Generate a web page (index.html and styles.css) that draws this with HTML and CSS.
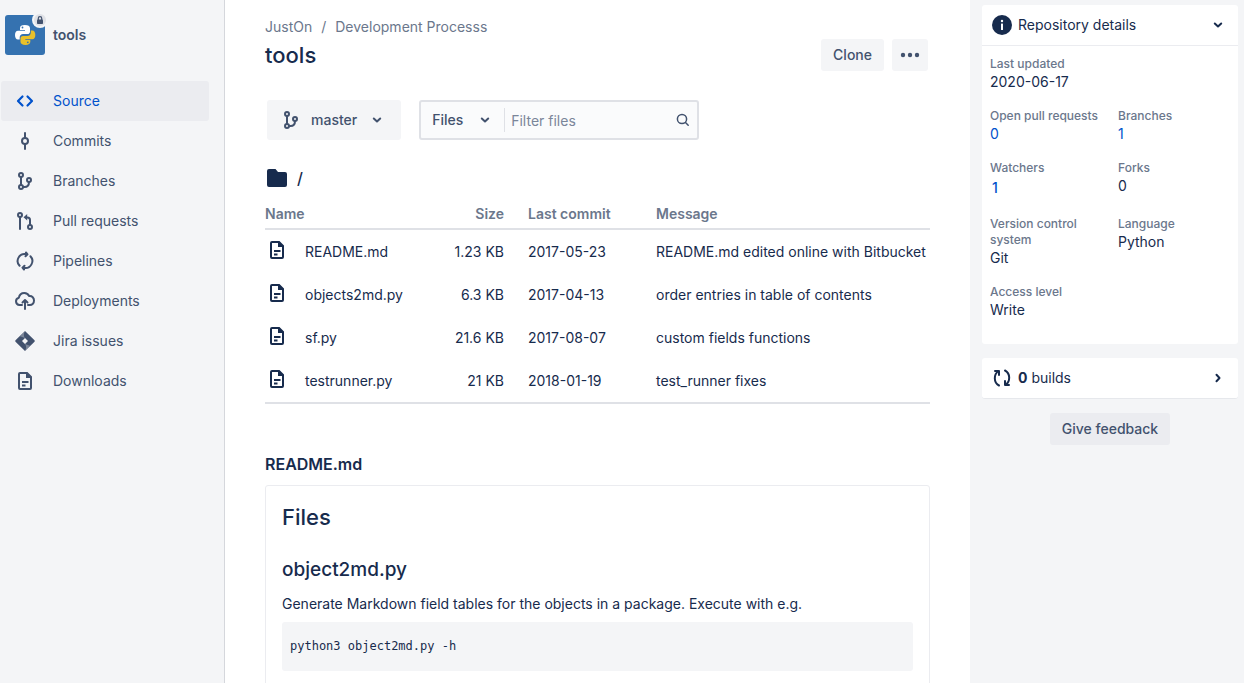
FILE: index.html
```html
<!DOCTYPE html>
<html lang="en">
<head>
<meta charset="utf-8">
<title>tools – Source</title>
<link rel="stylesheet" href="styles.css">
</head>
<body>
<svg class="sprite" aria-hidden="true">
  <symbol id="i-source" viewBox="0 0 24 24"><path d="M9.500 7.500 5 12l4.500 4.500M14.500 7.500 19 12l-4.500 4.500" fill="none" stroke="currentColor" stroke-width="2.200" stroke-linecap="round" stroke-linejoin="round"/></symbol>
  <symbol id="i-commit" viewBox="0 0 24 24"><g fill="none" stroke="currentColor" stroke-width="2"><circle cx="12" cy="12" r="3"/><path d="M12 4v5M12 15v5" stroke-linecap="round"/></g></symbol>
  <symbol id="i-branch" viewBox="0 0 24 24"><g fill="none" stroke="currentColor" stroke-width="2"><circle cx="8" cy="6" r="2"/><circle cx="8" cy="18" r="2"/><circle cx="16" cy="11" r="2"/><path d="M8 8v8M10 18h1.500c3 0 4.500-1.700 4.500-5"/></g></symbol>
  <symbol id="i-pull" viewBox="0 0 24 24"><g fill="none" stroke="currentColor" stroke-width="2"><circle cx="7" cy="6" r="2"/><circle cx="17" cy="18" r="2"/><path d="M7 8v12" stroke-linecap="round"/><path d="M12.500 8.500h2c1.700 0 2.500.9 2.500 2.500v5"/></g><path d="M10.500 8.300 14.200 5v6.600z" fill="currentColor"/></symbol>
  <symbol id="i-pipe" viewBox="0 0 24 24"><g fill="none" stroke="currentColor" stroke-width="2" stroke-linecap="round"><path d="M6.600 16.800A7 7 0 0 1 13 5.100"/><path d="M17.400 7.200A7 7 0 0 1 11 18.900"/><path d="M13 3.500l1.500 1.800-2 2M11 20.500l-1.500-1.800 2-2" stroke-linejoin="round"/></g></symbol>
  <symbol id="i-deploy" viewBox="0 0 24 24"><g fill="none" stroke="currentColor" stroke-width="2" stroke-linecap="round" stroke-linejoin="round"><path d="M9 16H6.500a3.700 3.700 0 0 1-.6-7.300C6.400 5.800 8.600 4 11.300 4c2.300 0 4 1.200 4.900 3.100 3-.3 4.800 1.900 4.800 4.500 0 2.500-1.700 4.400-4.200 4.400H15"/><path d="M12 20v-8M9.500 13.500 12 11l2.500 2.500"/></g></symbol>
  <symbol id="i-jira" viewBox="0 0 24 24"><path d="M12 2 2.500 11.300a1 1 0 0 0 0 1.400L12 22l9.500-9.300a1 1 0 0 0 0-1.400zm0 7 3 3-3 3-3-3z" fill="currentColor" fill-rule="evenodd"/><path d="M12 9C10.500 7.500 10.500 4.500 12 2L7 7.300zM12 15c1.500 1.500 1.500 4.500 0 7l5-5.300z" fill="#fff" opacity=".3"/></symbol>
  <symbol id="i-file" viewBox="0 0 24 24"><path d="M14 4H7a1 1 0 0 0-1 1v14a1 1 0 0 0 1 1h10a1 1 0 0 0 1-1V8.500" fill="none" stroke="currentColor" stroke-width="2"/><path d="M13 3h1.500L19 7.500V9h-6zM9 12h6.500v2H9zM9 15.500h3.500v2H9z" fill="currentColor"/></symbol>
  <symbol id="i-chevron" viewBox="0 0 16 16"><path d="M4.800 6.500 8 9.500l3.200-3" fill="none" stroke="currentColor" stroke-width="2" stroke-linecap="round" stroke-linejoin="round"/></symbol>
  <symbol id="i-search" viewBox="0 0 16 16"><g fill="none" stroke="currentColor" stroke-width="1.500" stroke-linecap="round"><circle cx="7" cy="7" r="4.600"/><path d="m10.500 10.500 2.700 2.700"/></g></symbol>
</svg>

<div class="app">
  <nav class="sidebar" aria-label="Repository">
    <div class="repo">
      <svg class="repo-logo" viewBox="0 0 46 46" role="img" aria-label="Python, private repository">
        <rect y="6" width="40" height="40" rx="3" fill="#3572b0"/>
        <path d="M19.800 16c-3.400 0-4.800 1.200-4.800 3.200V21h5v.8h-7c-2 0-3 1.700-3 4.200s1 4.500 3 4.500h1.700v-2.200c0-2 1.500-3.300 3.300-3.300h4.500c1.600 0 2.500-1.200 2.500-2.600v-3.200c0-2-1.800-3.200-5.200-3.200z" fill="#fff"/>
        <path d="M20.500 36c3.300 0 4.800-1.200 4.800-3.200V31h-5v-.8h7c2 0 3-1.700 3-4.200s-1-4.500-3-4.500h-1.500v2.200c0 2-1.500 3.300-3.300 3.300H18c-1.600 0-2.500 1.200-2.500 2.600v3.200c0 2 1.700 3.200 5 3.200z" fill="#e8c02a"/>
        <circle cx="17.500" cy="18.500" r=".9" fill="#3572b0"/><circle cx="22.800" cy="33.300" r=".9" fill="#3572b0"/>
        <circle cx="35" cy="11" r="8" fill="#f4f5f7"/><circle cx="35" cy="11" r="6" fill="#dfe1e6"/>
        <rect x="32" y="10.500" width="6" height="4.500" rx=".8" fill="#42526e"/><path d="M33.300 11V9.300a1.700 1.700 0 0 1 3.400 0V11" fill="none" stroke="#42526e" stroke-width="1.200"/>
      </svg>
      <span>tools</span>
    </div>
    <ul class="nav">
      <li><a class="active" href="#" aria-current="page"><svg class="icon"><use href="#i-source"/></svg>Source</a></li>
      <li><a href="#"><svg class="icon"><use href="#i-commit"/></svg>Commits</a></li>
      <li><a href="#"><svg class="icon"><use href="#i-branch"/></svg>Branches</a></li>
      <li><a href="#"><svg class="icon"><use href="#i-pull"/></svg>Pull requests</a></li>
      <li><a href="#"><svg class="icon"><use href="#i-pipe"/></svg>Pipelines</a></li>
      <li><a href="#"><svg class="icon"><use href="#i-deploy"/></svg>Deployments</a></li>
      <li><a href="#"><svg class="icon"><use href="#i-jira"/></svg>Jira issues</a></li>
      <li><a href="#"><svg class="icon"><use href="#i-file"/></svg>Downloads</a></li>
    </ul>
  </nav>

  <main class="main">
    <div class="crumbs"><a href="#">JustOn</a><span>/</span><a href="#">Development Processs</a></div>
    <header class="head">
      <h1>tools</h1>
      <div class="actions">
        <button class="btn" type="button">Clone</button>
        <button class="btn more" type="button" aria-label="More actions"><svg viewBox="0 0 20 6"><g fill="currentColor"><circle cx="3" cy="3" r="2.200"/><circle cx="10" cy="3" r="2.200"/><circle cx="17" cy="3" r="2.200"/></g></svg></button>
      </div>
    </header>
    <div class="tools">
      <button class="btn branch" type="button"><svg class="icon"><use href="#i-branch"/></svg>master<svg class="small"><use href="#i-chevron"/></svg></button>
      <div class="filter">
        <div class="kind">
          <select aria-label="Filter by"><option>Files</option></select>
          <svg class="small"><use href="#i-chevron"/></svg>
        </div>
        <input type="text" placeholder="Filter files" aria-label="Filter files">
        <svg class="small"><use href="#i-search"/></svg>
      </div>
    </div>
    <div class="path"><svg class="icon" viewBox="0 0 24 24"><path d="M4 3h6.500l2.500 3h7a2 2 0 0 1 2 2v11a2 2 0 0 1-2 2H4a2 2 0 0 1-2-2V5a2 2 0 0 1 2-2z" fill="currentColor"/></svg>/</div>
    <table class="files">
      <thead><tr><th class="name" colspan="2">Name</th><th class="size">Size</th><th class="date">Last commit</th><th>Message</th></tr></thead>
      <tbody>
        <tr><td class="ico"><svg class="icon"><use href="#i-file"/></svg></td><td><a href="#">README.md</a></td><td class="size">1.23 KB</td><td class="date">2017-05-23</td><td>README.md edited online with Bitbucket</td></tr>
        <tr><td class="ico"><svg class="icon"><use href="#i-file"/></svg></td><td><a href="#">objects2md.py</a></td><td class="size">6.3 KB</td><td class="date">2017-04-13</td><td>order entries in table of contents</td></tr>
        <tr><td class="ico"><svg class="icon"><use href="#i-file"/></svg></td><td><a href="#">sf.py</a></td><td class="size">21.6 KB</td><td class="date">2017-08-07</td><td>custom fields functions</td></tr>
        <tr><td class="ico"><svg class="icon"><use href="#i-file"/></svg></td><td><a href="#">testrunner.py</a></td><td class="size">21 KB</td><td class="date">2018-01-19</td><td>test_runner fixes</td></tr>
      </tbody>
    </table>
    <h2 class="readme-title">README.md</h2>
    <article class="readme">
      <h3>Files</h3>
      <h4>object2md.py</h4>
      <p>Generate Markdown field tables for the objects in a package. Execute with e.g.</p>
      <pre>python3 object2md.py -h</pre>
    </article>
  </main>

  <aside class="details">
    <section class="card">
      <button class="card-head" type="button" aria-expanded="true">
        <svg class="icon" viewBox="0 0 24 24"><circle cx="12" cy="12" r="10" fill="currentColor"/><rect x="11" y="10.500" width="2" height="6.500" rx=".5" fill="#fff"/><circle cx="12" cy="8" r="1.200" fill="#fff"/></svg>
        <span>Repository details</span>
        <svg class="small"><use href="#i-chevron"/></svg>
      </button>
      <dl class="facts">
        <div class="wide"><dt>Last updated</dt><dd>2020-06-17</dd></div>
        <div><dt>Open pull requests</dt><dd><a href="#">0</a></dd></div>
        <div><dt>Branches</dt><dd><a href="#">1</a></dd></div>
        <div><dt>Watchers</dt><dd><button class="count" type="button">1</button></dd></div>
        <div><dt>Forks</dt><dd>0</dd></div>
        <div><dt>Version control system</dt><dd>Git</dd></div>
        <div><dt>Language</dt><dd>Python</dd></div>
        <div class="wide"><dt>Access level</dt><dd>Write</dd></div>
      </dl>
    </section>
    <section class="card builds">
      <button class="card-head" type="button" aria-expanded="false">
        <svg class="icon" viewBox="0 0 24 24"><g fill="none" stroke="currentColor" stroke-width="2" stroke-linecap="round" stroke-linejoin="round"><path d="M9 19.500C3.500 16.500 3.500 8.500 8.500 5M5 5h4v4"/><path d="M15 4.500c5.500 3 5.500 11 .5 14.500M19 19h-4v-4"/></g></svg>
        <span><b>0</b> builds</span>
        <svg class="small right"><use href="#i-chevron"/></svg>
      </button>
    </section>
    <button class="btn feedback" type="button">Give feedback</button>
  </aside>
</div>
</body>
</html>
```

FILE: styles.css
```css
* { box-sizing: border-box; }
body { margin: 0; background: #fff; color: #172b4d; font: 14px/20px Inter, "Liberation Sans", sans-serif; }
a { color: inherit; text-decoration: none; }
button, input, select { font: inherit; color: inherit; border: 0; background: none; margin: 0; padding: 0; }
h1, h2, h3, h4, p, pre, ul, dl, dd { margin: 0; padding: 0; }
.sprite { display: none; }
.icon { display: block; flex: none; width: 24px; height: 24px; }
.small { display: block; flex: none; width: 16px; height: 16px; }
.app { display: flex; height: 100vh; overflow: hidden; }

.sidebar { flex: none; width: 225px; padding: 9px 15px 0 1px; background: #f4f5f7; border-right: 1px solid #d5d7dc; color: #42526e; }
.repo { display: flex; align-items: center; gap: 2px; padding-left: 4px; font-weight: 600; }
.repo-logo { display: block; width: 46px; height: 46px; }
.repo span { padding-top: 6px; }
.nav { list-style: none; margin-top: 26px; }
.nav a { display: flex; align-items: center; gap: 16px; height: 40px; padding-left: 12px; border-radius: 3px; }
.nav .active { background: #ebecf0; color: #0052cc; }

.main { flex: 1; min-width: 0; padding: 17px 40px 0; }
.crumbs { display: flex; gap: 9px; color: #6b778c; }
.head { display: flex; justify-content: space-between; align-items: center; height: 36px; padding-right: 2px; }
.head h1 { font-size: 22px; line-height: 28px; font-weight: 500; }
.actions { display: flex; gap: 8px; }
.btn { height: 32px; padding: 0 12px; border-radius: 3px; background: #f4f5f7; color: #42526e; font-weight: 500; }
.more { width: 36px; padding: 0 8px; }
.more svg { display: block; width: 20px; height: 6px; }
.tools { display: flex; gap: 18px; padding: 27px 2px 0; }
.branch { display: flex; align-items: center; gap: 8px; height: 40px; padding: 0 16px 0 12px; }
.branch .small { margin-left: 4px; }
.filter { display: flex; align-items: center; width: 280px; height: 40px; padding-right: 6px; border: 2px solid #dfe1e6; border-radius: 3px; background: #fafbfc; }
.kind { position: relative; flex: none; width: 84px; height: 24px; border-right: 1px solid #dfe1e6; color: #42526e; }
.kind select { appearance: none; width: 100%; height: 24px; padding: 0 28px 0 11px; font-weight: 500; }
.kind .small { position: absolute; right: 11px; top: 4px; pointer-events: none; }
.filter input { flex: 1; min-width: 0; height: 24px; padding-left: 6px; }
.filter input::placeholder { color: #7a869a; opacity: 1; }
.filter > .small { color: #42526e; }
.path { display: flex; align-items: center; gap: 8px; margin-top: 26px; font-size: 16px; line-height: 24px; font-weight: 500; }
.files { width: 100%; margin-top: 14px; border-collapse: separate; border-spacing: 0; border-bottom: 2px solid #dfe1e6; }
.files th, .files td { padding: 0; text-align: left; white-space: nowrap; }
.files th { height: 26px; padding-bottom: 4px; border-bottom: 2px solid #dfe1e6; color: #6b778c; font-weight: 600; }
.files td { height: 43px; }
.files .ico { width: 40px; }
.files .ico .icon { margin-bottom: 4px; }
.files .size { width: 88px; padding-right: 24px; text-align: right; }
.files .date { width: 128px; }
.files th:last-child { width: 274px; }
.readme-title { margin-top: 48px; font-size: 16px; line-height: 24px; font-weight: 600; }
.readme { margin-top: 9px; padding: 16px; border: 1px solid #ebecf0; border-radius: 3px; height: 300px; }
.readme h3 { font-size: 22px; line-height: 30px; font-weight: 500; }
.readme h4 { margin-top: 26px; font-size: 19px; line-height: 24px; font-weight: 500; }
.readme p { margin-top: 12px; }
.readme pre { margin-top: 8px; padding: 14px 8px 15px; border-radius: 3px; background: #f4f5f7; font: 12px/20px "DejaVu Sans Mono", monospace; }

.details { flex: none; width: 274px; padding: 5px 6px 0 12px; background: #f4f5f7; display: flex; flex-direction: column; }
.card { background: #fff; border-radius: 3px; }
.card-head { display: flex; align-items: center; gap: 4px; width: 100%; height: 40px; padding: 0 12px 0 8px; text-align: left; }
.card-head span { flex: 1; }
.right { transform: rotate(-90deg); }
.facts { display: grid; grid-template-columns: 120px 1fr; gap: 16px 8px; padding: 10px 8px 24px; border-top: 1px solid #ebecf0; }
.facts .wide { grid-column: 1 / -1; }
.facts dt { color: #6b778c; font-size: 12px; line-height: 16px; font-weight: 500; }
.facts dd { line-height: 20px; }
.facts a, .count { color: #0052cc; }
.count { padding: 0 2px; line-height: 24px; font-weight: 500; display: block; }
.builds { margin-top: 14px; border-bottom: 1px solid #e6e8ec; }
.feedback { align-self: center; margin-top: 14px; background: #ebecf0; }
```
